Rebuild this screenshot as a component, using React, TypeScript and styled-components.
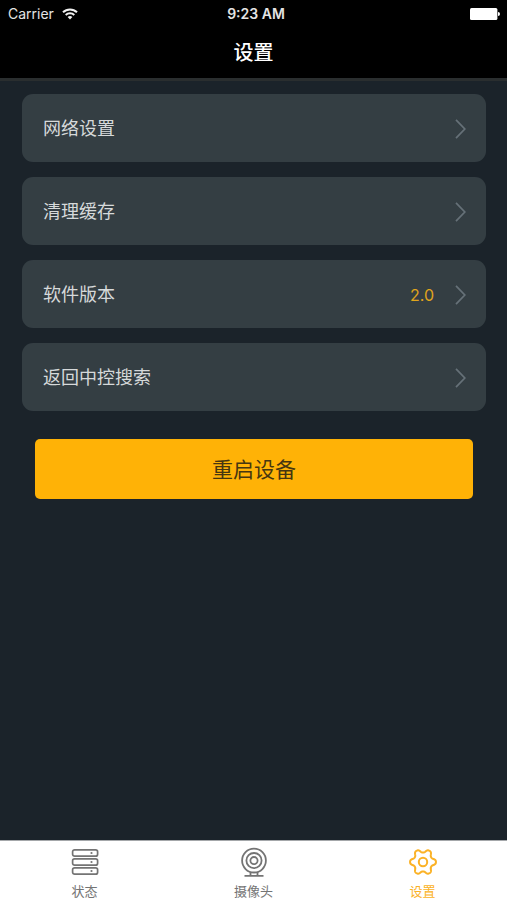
import React from "react";
import styled, { createGlobalStyle } from "styled-components";

const GlobalStyle = createGlobalStyle`
  *, *::before, *::after { box-sizing: border-box; }
  body {
    margin: 0;
    background: #1b232a;
    font-family: Inter, "Noto Sans CJK SC", sans-serif;
  }
  button { font-family: inherit; cursor: pointer; }
`;

const Screen = styled.div`
  display: flex;
  flex-direction: column;
  min-height: 100vh;
  background: #1b232a;
`;

const Header = styled.header`
  background: #000;
  border-bottom: 3px solid #2a2e2f;
  padding-bottom: 9px;
`;

const StatusBar = styled.div`
  display: grid;
  grid-template-columns: 1fr auto 1fr;
  align-items: center;
  height: 28px;
  padding: 0 7px 0 8px;
  color: #e4e4e4;
  font-size: 14px;
  line-height: 20px;
`;

const Carrier = styled.span`
  display: flex;
  align-items: center;
  gap: 8px;
`;

const Clock = styled.time`
  padding-left: 4px;
  font-weight: 600;
`;

const BatterySlot = styled.span`
  display: flex;
  justify-content: flex-end;
`;

const Title = styled.h1`
  margin: 9px 0 0;
  color: #fff;
  font-size: 20px;
  font-weight: 500;
  line-height: 32px;
  text-align: center;
`;

const Content = styled.main`
  flex: 1;
  padding: 13px 21px 24px 22px;
`;

const SettingsList = styled.ul`
  display: flex;
  flex-direction: column;
  gap: 15px;
  margin: 0;
  padding: 0;
  list-style: none;
`;

const SettingRow = styled.button`
  display: flex;
  align-items: center;
  width: 100%;
  height: 68px;
  padding: 2px 20px 0 21px;
  border: 0;
  border-radius: 11px;
  background: #343e43;
  color: #d6d9da;
  font-size: 18px;
  line-height: 26px;
  text-align: left;
`;

const RowLabel = styled.span`
  flex: 1;
`;

const RowValue = styled.span`
  margin-right: 21px;
  color: #e0a51c;
  font-size: 16px;
`;

const RestartButton = styled.button`
  display: block;
  width: calc(100% - 26px);
  height: 60px;
  margin: 28px 13px 0;
  padding: 2px 0 0;
  border: 0;
  border-radius: 5px;
  background: #ffb206;
  color: #453611;
  font-size: 21px;
  line-height: 30px;
`;

const TabBar = styled.nav`
  display: grid;
  grid-template-columns: repeat(3, 1fr);
  height: 60px;
  border-top: 1px solid #a4a7aa;
  background: #fff;
`;

const Tab = styled.button<{ $active?: boolean }>`
  display: flex;
  flex-direction: column;
  align-items: center;
  gap: 4px;
  padding: 6px 0 0;
  border: 0;
  background: none;
  color: ${({ $active }) => ($active ? "#fbb226" : "#747474")};
  font-size: 13px;
  line-height: 20px;
`;

const WifiIcon = () => (
  <svg width="16" height="12" viewBox="0 0 16 12" fill="none" stroke="#f2f2f2" strokeWidth="2" aria-hidden="true">
    <path d="M1 4.3a10 10 0 0 1 14 0" />
    <path d="M3.7 7a6.2 6.2 0 0 1 8.6 0" />
    <path d="M8 11.6 5.6 9.1a3.4 3.4 0 0 1 4.8 0Z" fill="#f2f2f2" stroke="none" />
  </svg>
);

const BatteryIcon = () => (
  <svg width="30" height="12" viewBox="0 0 30 12" fill="#fff" role="img" aria-label="Battery full">
    <rect x="0" y="0" width="27.4" height="12" rx="1.5" />
    <path d="M28 4a2 2 0 0 1 0 4Z" />
  </svg>
);

const ChevronIcon = () => (
  <svg width="11" height="20" viewBox="0 0 11 20" fill="none" stroke="#667178" strokeWidth="1.7" aria-hidden="true">
    <path d="M1 0.8 9.8 10 1 19.2" />
  </svg>
);

const ServerIcon = () => (
  <svg width="28" height="30" viewBox="0 0 28 30" fill="none" stroke="currentColor" strokeWidth="1.7" aria-hidden="true">
    {[2.8, 11.8, 20.8].map((y) => (
      <g key={y}>
        <rect x="1.6" y={y} width="25" height="6.4" rx="2" />
        <circle cx="20.5" cy={y + 3.2} r="1.1" fill="currentColor" stroke="none" />
      </g>
    ))}
  </svg>
);

const CameraIcon = () => (
  <svg width="28" height="30" viewBox="0 0 28 30" fill="none" stroke="currentColor" strokeWidth="1.8" aria-hidden="true">
    <circle cx="14" cy="13.6" r="11.9" />
    <circle cx="14" cy="13.6" r="7.6" />
    <circle cx="14" cy="13.6" r="3.6" />
    <path d="M10.5 25v3M17.5 25v3M4.5 28.8h19" />
  </svg>
);

// Outline with six soft teeth, sampled from a wavy circle with flattened crests.
const gearOutline =
  Array.from({ length: 180 }, (_, i) => {
    const a = (i / 180) * Math.PI * 2;
    const r = 11.2 + 1.75 * Math.tanh(1.2 * Math.cos(6 * a)) / Math.tanh(1.2);
    return `${i ? "L" : "M"}${(14 + r * Math.cos(a)).toFixed(2)} ${(15 + r * Math.sin(a)).toFixed(2)}`;
  }).join("") + "Z";

const GearIcon = () => (
  <svg width="28" height="30" viewBox="0 0 28 30" fill="none" stroke="currentColor" strokeWidth="2" strokeLinejoin="round" aria-hidden="true">
    <path d={gearOutline} />
    <circle cx="14" cy="15" r="4.2" />
  </svg>
);

const settings: { label: string; value?: string }[] = [
  { label: "网络设置" },
  { label: "清理缓存" },
  { label: "软件版本", value: "2.0" },
  { label: "返回中控搜索" },
];

const tabs = [
  { label: "状态", Icon: ServerIcon },
  { label: "摄像头", Icon: CameraIcon },
  { label: "设置", Icon: GearIcon, active: true },
];

export default function App() {
  return (
    <Screen lang="zh-CN">
      <GlobalStyle />
      <Header>
        <StatusBar>
          <Carrier>
            Carrier
            <WifiIcon />
          </Carrier>
          <Clock>9:23 AM</Clock>
          <BatterySlot>
            <BatteryIcon />
          </BatterySlot>
        </StatusBar>
        <Title>设置</Title>
      </Header>
      <Content>
        <SettingsList>
          {settings.map(({ label, value }) => (
            <li key={label}>
              <SettingRow type="button">
                <RowLabel>{label}</RowLabel>
                {value && <RowValue>{value}</RowValue>}
                <ChevronIcon />
              </SettingRow>
            </li>
          ))}
        </SettingsList>
        <RestartButton type="button">重启设备</RestartButton>
      </Content>
      <TabBar>
        {tabs.map(({ label, Icon, active }) => (
          <Tab key={label} type="button" $active={active} aria-current={active ? "page" : undefined}>
            <Icon />
            {label}
          </Tab>
        ))}
      </TabBar>
    </Screen>
  );
}
